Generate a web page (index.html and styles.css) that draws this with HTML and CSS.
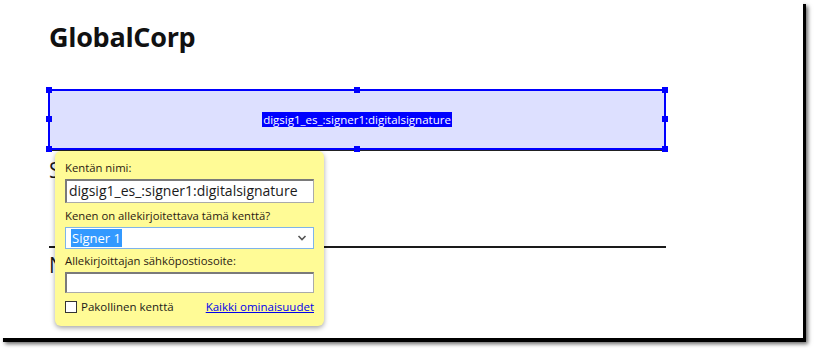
FILE: index.html
```html
<!DOCTYPE html>
<html lang="fi">
<head>
  <meta charset="UTF-8">
  <title>GlobalCorp</title>
  <link rel="stylesheet" href="styles.css">
</head>
<body>
  <div class="page">
    <h1 class="title">GlobalCorp</h1>

    <div class="sig-field">
      <span class="sig-name">digsig1_es_:signer1:digitalsignature</span>
      <span class="handle h-tl"></span>
      <span class="handle h-tc"></span>
      <span class="handle h-tr"></span>
      <span class="handle h-ml"></span>
      <span class="handle h-mr"></span>
      <span class="handle h-bl"></span>
      <span class="handle h-bc"></span>
      <span class="handle h-br"></span>
    </div>

    <p class="page-text">Signature</p>
    <div class="rule"></div>
    <p class="page-text name">Name</p>

    <div class="popup">
      <label class="lbl">Kentän nimi:</label>
      <div class="input">digsig1_es_:signer1:digitalsignature</div>
      <label class="lbl">Kenen on allekirjoitettava tämä kenttä?</label>
      <div class="select">
        <span class="selected">Signer 1</span>
        <svg width="10" height="8" viewBox="0 0 10 8"><path d="M1.5 2l3.5 3.5L8.5 2" fill="none" stroke="#555" stroke-width="1.6"/></svg>
      </div>
      <label class="lbl">Allekirjoittajan sähköpostiosoite:</label>
      <div class="input empty"></div>
      <div class="footer">
        <label class="check"><span class="box"></span>Pakollinen kenttä</label>
        <a href="#" class="link">Kaikki ominaisuudet</a>
      </div>
    </div>
  </div>
</body>
</html>
```

FILE: styles.css
```css
* {
  margin: 0;
  padding: 0;
  box-sizing: border-box;
}

html,
body {
  height: 350px;
  overflow: hidden;
}

body {
  background: #fff;
  font-family: "Open Sans", "Noto Sans", sans-serif;
  color: #1a1a1a;
}

.page {
  position: relative;
  width: 803px;
  height: 338px;
  max-height: 338px;
  overflow: visible;
  background: #fff;
  padding: 18px 0 0 49px;
  box-shadow: 3px 4px 0 #000, 5px 6px 4px rgba(0, 0, 0, 0.6);
}

.title {
  font-size: 27px;
  font-weight: 700;
  line-height: 38px;
  letter-spacing: -0.3px;
  color: #111;
}

.sig-field {
  position: relative;
  margin: 33px 0 0 -1px;
  width: 618px;
  height: 61px;
  border: 2px solid #0000ff;
  background: #dde0ff;
  display: flex;
  align-items: center;
  justify-content: center;
  box-shadow: 0 1px 0 #222;
}

.sig-name {
  background: #0000ff;
  color: #fff;
  font-size: 11.5px;
  line-height: 15px;
  padding: 0 1px;
}

.handle {
  position: absolute;
  width: 6px;
  height: 6px;
  background: #0000ff;
}

.h-tl { left: -4px; top: -4px; }
.h-tc { left: 304px; top: -4px; }
.h-tr { right: -4px; top: -4px; }
.h-ml { left: -4px; top: 25px; }
.h-mr { right: -4px; top: 25px; }
.h-bl { left: -4px; bottom: -4px; }
.h-bc { left: 304px; bottom: -4px; }
.h-br { right: -4px; bottom: -4px; }

.page-text {
  font-size: 21px;
  line-height: 28px;
  margin-top: 6px;
}

.rule {
  width: 617px;
  height: 2px;
  background: #1a1a1a;
  margin-top: 62px;
}

.page-text.name {
  margin-top: 3px;
}

.popup {
  position: absolute;
  left: 55px;
  top: 151px;
  width: 269px;
  height: 175px;
  background: #fffb96;
  border-radius: 6px;
  box-shadow: 0 2px 5px rgba(0, 0, 0, 0.35);
  padding: 9px 10px 0 10px;
  display: flex;
  flex-direction: column;
  font-size: 11.3px;
}

.lbl {
  line-height: 16px;
  color: #2a1a12;
}

.input {
  height: 24px;
  margin: 3px 0 5px;
  background: #fff;
  border: 1px solid #aaa;
  border-top: 2px solid #7a7a7a;
  border-left: 2px solid #7a7a7a;
  font-size: 14px;
  line-height: 20px;
  padding-left: 2px;
}

.input.empty {
  height: 21px;
  margin-bottom: 6px;
}

.select {
  height: 22px;
  margin: 3px 0 4px;
  background: #fff;
  border: 1px solid #7eb4ea;
  display: flex;
  align-items: center;
  justify-content: space-between;
  padding: 0 6px 0 5px;
  font-size: 13px;
}

.selected {
  background: #3399ff;
  color: #fff;
  line-height: 18px;
  padding: 0 1px;
}

.footer {
  display: flex;
  justify-content: space-between;
  align-items: center;
  font-size: 11.5px;
}

.check {
  display: flex;
  align-items: center;
  gap: 4px;
}

.box {
  width: 12px;
  height: 12px;
  border: 1px solid #333;
  background: #fff;
}

.link {
  color: #0000ee;
  text-decoration: underline;
}
```
